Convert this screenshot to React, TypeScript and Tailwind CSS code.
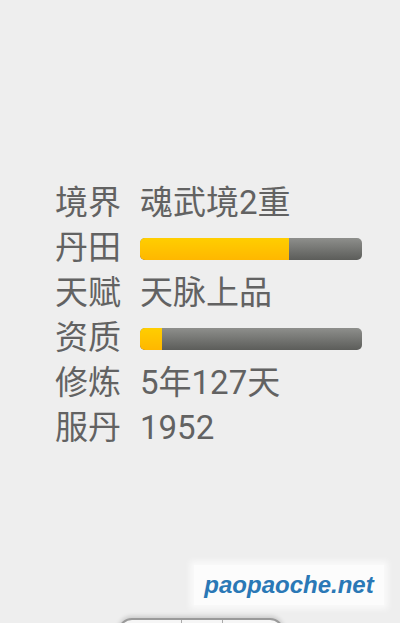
import React from 'react';

const font = { fontFamily: 'Roboto, "Noto Sans CJK SC", sans-serif' };

function Bar({ pct }: { pct: number }) {
  return (
    <div className="relative h-[22px] w-[222px] overflow-hidden rounded-[5px] bg-gradient-to-b from-[#8e8f8c] to-[#5c5d5a]">
      <div
        className="h-full bg-gradient-to-b from-[#ffce00] to-[#ffb700]"
        style={{ width: `${pct}%` }}
      />
    </div>
  );
}

const rows: { label: string; value?: string; bar?: number }[] = [
  { label: '境界', value: '魂武境2重' },
  { label: '丹田', bar: 67 },
  { label: '天赋', value: '天脉上品' },
  { label: '资质', bar: 10 },
  { label: '修炼', value: '5年127天' },
  { label: '服丹', value: '1952' },
];

export default function App() {
  return (
    <div className="relative h-[623px] w-[400px] overflow-hidden bg-[#eeeeee]" style={font}>
      <div className="flex flex-col pt-[180px] pl-[55px]">
        {rows.map((r) => (
          <div key={r.label} className="flex h-[45px] items-center">
            <span className="w-[85px] text-[33px] leading-none text-[#626262]">{r.label}</span>
            {r.bar !== undefined ? (
              <div className="pt-[3px]">
                <Bar pct={r.bar} />
              </div>
            ) : (
              <span className="text-[33px] leading-none text-[#626262]">{r.value}</span>
            )}
          </div>
        ))}
      </div>

      <div className="absolute left-[194px] top-[565px] flex h-[40px] w-[190px] items-center justify-center bg-white/80 shadow-[0_0_6px_4px_rgba(255,255,255,0.7)]">
        <span
          className="text-[24px] font-bold italic text-[#2a78b6]"
          style={{ fontFamily: '"Liberation Sans", Arial, sans-serif' }}
        >
          paopaoche.net
        </span>
      </div>

      <div className="absolute left-[118px] top-[618px] flex h-[30px] w-[166px] rounded-t-[14px] border-2 border-[#9a9a9a] bg-[#f6f6f6] shadow-[0_-2px_4px_rgba(0,0,0,0.15)]">
        <div className="w-[62px] border-r border-[#aaaaaa]" />
        <div className="w-[41px] border-r border-[#aaaaaa]" />
        <div className="flex-1" />
      </div>
    </div>
  );
}
